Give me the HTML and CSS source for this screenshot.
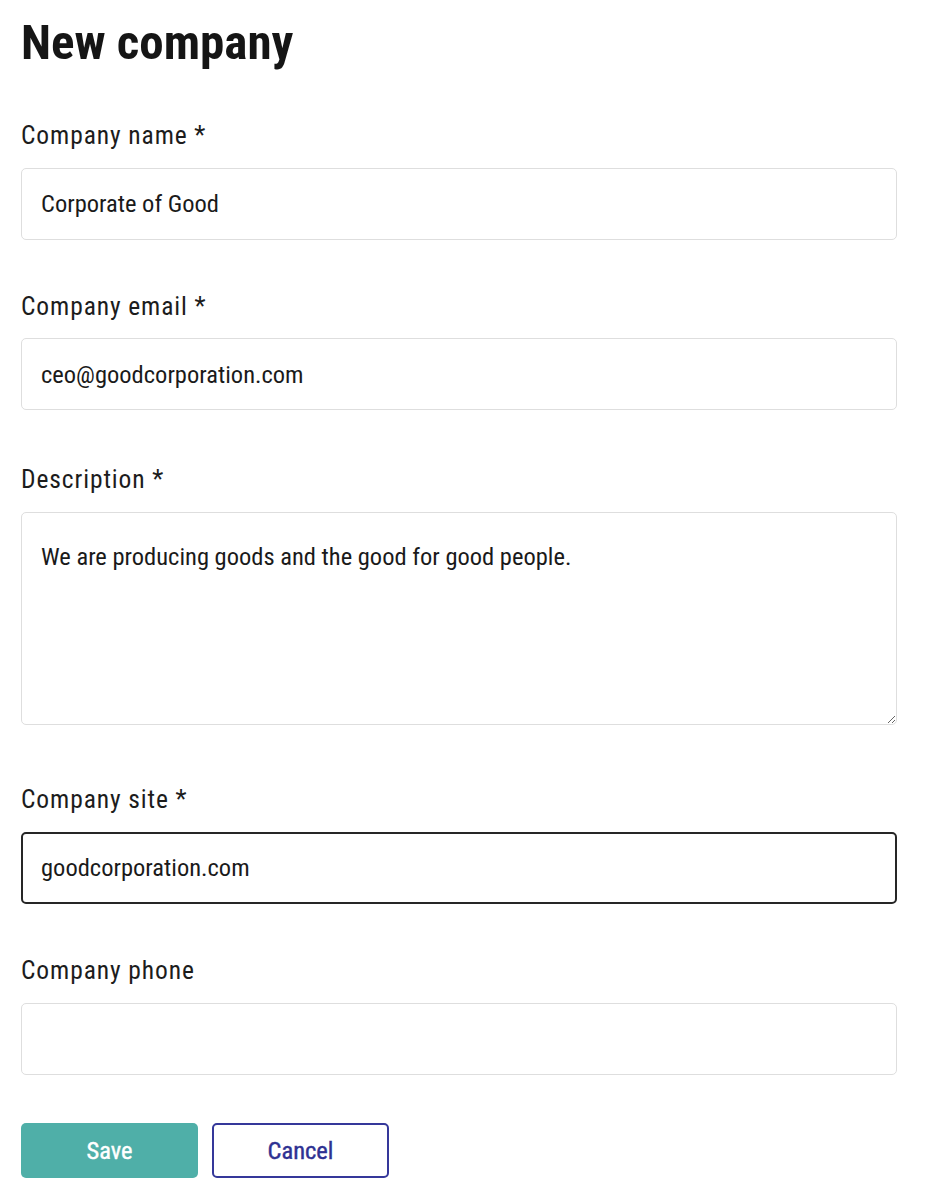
FILE: index.html
```html
<!DOCTYPE html>
<html lang="en">
<head>
<meta charset="utf-8">
<title>New company</title>
<link rel="stylesheet" href="styles.css">
</head>
<body>
<main class="page">
  <h1 class="title">New company</h1>
  <form class="form">
    <div class="field">
      <label class="label" for="name">Company name *</label>
      <input class="input" id="name" type="text" value="Corporate of Good">
    </div>
    <div class="field field-email">
      <label class="label" for="email">Company email *</label>
      <input class="input" id="email" type="text" value="ceo@goodcorporation.com">
    </div>
    <div class="field field-area">
      <label class="label" for="desc">Description *</label>
      <textarea class="input textarea" id="desc">We are producing goods and the good for good people.</textarea>
    </div>
    <div class="field">
      <label class="label" for="site">Company site *</label>
      <input class="input input-active" id="site" type="text" value="goodcorporation.com">
    </div>
    <div class="field">
      <label class="label" for="phone">Company phone</label>
      <input class="input" id="phone" type="text" value="">
    </div>
    <div class="actions">
      <button class="btn btn-save" type="button">Save</button>
      <button class="btn btn-cancel" type="button">Cancel</button>
    </div>
  </form>
</main>
</body>
</html>
```
FILE: styles.css
```css
* { box-sizing: border-box; }
html, body { margin: 0; padding: 0; background: #ffffff; }
body {
  font-family: "Roboto Condensed", "Roboto", "Liberation Sans", sans-serif;
  font-stretch: 75%;
  color: #1a1a1a;
}
.page {
  padding: 14px 28px 0 21px;
}
.title {
  margin: 0 0 48px;
  font-size: 49px;
  line-height: 1.2;
  font-weight: 700;
  color: #151515;
}
.form { display: flex; flex-direction: column; }
.field {
  display: flex;
  flex-direction: column;
  margin-bottom: 52px;
}
.field-email { margin-bottom: 55px; }
.field-area { margin-bottom: 60px; }
.label {
  font-size: 25.5px;
  line-height: 28.8px;
  letter-spacing: 0.9px;
  margin-bottom: 18px;
  color: #1c1c1c;
}
.input {
  display: block;
  width: 100%;
  height: 72px;
  border: 1px solid #dedede;
  border-radius: 5px;
  padding: 0 19px;
  font-family: inherit;
  font-stretch: 75%;
  font-size: 24.5px;
  color: #1a1a1a;
  background: #fff;
  outline: none;
}
.textarea {
  height: 213px;
  padding: 30px 19px;
  line-height: 28.8px;
  resize: vertical;
}
.input-active {
  border: 2px solid #262626;
  padding: 0 18px;
}
.actions {
  display: flex;
  align-items: center;
  gap: 14px;
  margin-top: -4px;
}
.btn {
  width: 177px;
  height: 55px;
  border-radius: 5px;
  font-family: inherit;
  font-stretch: 75%;
  font-size: 24.5px;
  font-weight: 400;
  -webkit-text-stroke: 0.4px currentColor;
  cursor: pointer;
}
.btn-save {
  background: #4fafa8;
  border: none;
  color: #ffffff;
}
.btn-cancel {
  background: #ffffff;
  border: 2px solid #35389a;
  color: #2e3192;
}
```
